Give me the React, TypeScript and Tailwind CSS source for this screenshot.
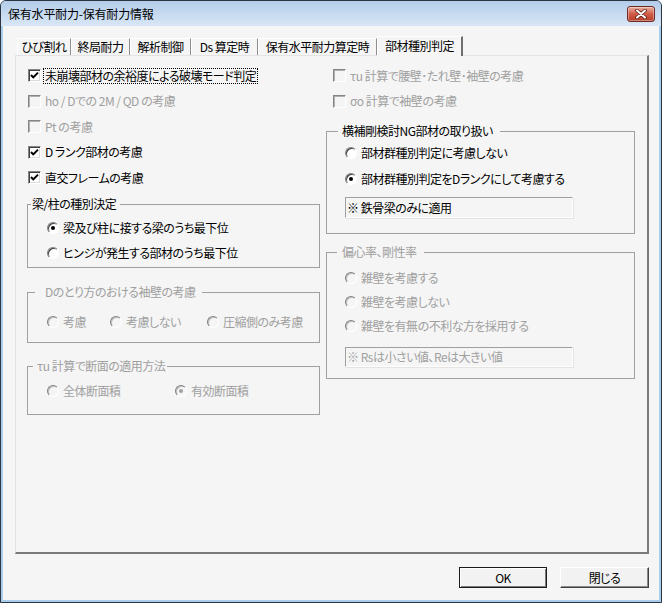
import React from 'react';

// text colour for greyed-out controls
const dis = 'text-[#a0a0a0]';

function CheckBox({ checked, disabled }: { checked?: boolean; disabled?: boolean }) {
  return (
    <span
      className={`flex h-[13px] w-[13px] shrink-0 items-center justify-center border border-t-[#858585] border-l-[#858585] border-b-white border-r-white ${
        disabled
          ? 'bg-[#f5f5f5] shadow-[inset_1px_1px_0_#b0b0b0]'
          : 'bg-white shadow-[inset_1px_1px_0_#404040,inset_-1px_-1px_0_#dcdcdc]'
      }`}
    >
      {checked && (
        <svg width="9" height="9" viewBox="0 0 9 9">
          <path d="M1 4 L3.3 6.4 L8 1.6" stroke="#000" strokeWidth="2" fill="none" />
        </svg>
      )}
    </span>
  );
}

function RadioDot({ checked, disabled }: { checked?: boolean; disabled?: boolean }) {
  return (
    <span
      className={`flex h-[12px] w-[12px] shrink-0 items-center justify-center rounded-full border border-t-[#808080] border-l-[#808080] border-b-white border-r-white ${
        disabled
          ? 'bg-[#f5f5f5] shadow-[inset_1px_1px_0_#c0c0c0]'
          : 'bg-white shadow-[inset_1px_1px_0_#404040]'
      }`}
    >
      {checked && (
        <span className={`h-[4px] w-[4px] rounded-full ${disabled ? 'bg-[#a0a0a0]' : 'bg-black'}`} />
      )}
    </span>
  );
}

type RowProps = {
  label: string;
  checked?: boolean;
  disabled?: boolean;
  focus?: boolean;
  className?: string;
};

function CheckRow({ label, checked, disabled, focus, className = '' }: RowProps) {
  return (
    <div className={`flex h-[25.5px] items-center ${className}`}>
      <CheckBox checked={checked} disabled={disabled} />
      <span
        className={`ml-[3px] whitespace-nowrap px-[1px] leading-[14px] ${disabled ? dis : 'text-black'} ${
          focus ? 'outline outline-1 outline-dotted outline-black' : ''
        }`}
      >
        {label}
      </span>
    </div>
  );
}

function RadioRow({ label, checked, disabled, className = '' }: RowProps) {
  return (
    <div className={`flex items-center ${className}`}>
      <RadioDot checked={checked} disabled={disabled} />
      <span className={`ml-[4px] whitespace-nowrap leading-[14px] ${disabled ? dis : 'text-black'}`}>{label}</span>
    </div>
  );
}

function Group({
  title,
  disabled,
  legendClass,
  className,
  children,
}: {
  title: string;
  disabled?: boolean;
  legendClass: string;
  className: string;
  children: React.ReactNode;
}) {
  return (
    <fieldset className={`border border-[#a0a0a0] p-0 ${className}`}>
      <legend className={`whitespace-nowrap leading-[14px] ${legendClass} ${disabled ? dis : 'text-black'}`}>
        {title}
      </legend>
      {children}
    </fieldset>
  );
}

function NoteBox({ text, disabled, className }: { text: string; disabled?: boolean; className: string }) {
  return (
    <div
      className={`ml-[18px] flex w-[228px] items-center border border-t-[#a0a0a0] border-l-[#a0a0a0] border-b-white border-r-white shadow-[1px_1px_0_#e3e3e3] ${className} ${
        disabled ? dis : 'text-black'
      }`}
    >
      <span className="pl-[1px] leading-[14px] whitespace-nowrap">{text}</span>
    </div>
  );
}

const tabs = [
  { label: 'ひび割れ', w: 'w-[54px]' },
  { label: '終局耐力', w: 'w-[59px]' },
  { label: '解析制御', w: 'w-[61px]' },
  { label: 'Ds 算定時', w: 'w-[67px]' },
  { label: '保有水平耐力算定時', w: 'w-[119px]' },
];

export default function App() {
  return (
    <div className="h-[603px] w-[662px] bg-white font-['Noto_Sans_CJK_JP','Noto_Sans_CJK_SC',sans-serif] text-[12px] tracking-[-0.5px] [font-feature-settings:'palt']">
      <div className="flex h-full w-full flex-col overflow-hidden rounded-t-[6px] border border-[#2b3440] bg-[#a9cdea]">
        {/* title bar */}
        <div className="flex h-[25px] shrink-0 items-center bg-gradient-to-b from-[#b3cce9] to-[#d9e7f6] pl-[7px] pr-[6px]">
          <span className="leading-[14px] tracking-[-0.2px] text-black">保有水平耐力-保有耐力情報</span>
          <div className="ml-auto flex h-[16px] w-[28px] items-center justify-center rounded-[3px] border border-[#6d2b22] bg-gradient-to-b from-[#e9b1a4] via-[#cf5a45] to-[#b8402c] shadow-[inset_0_0_0_1px_rgba(255,255,255,0.35)]">
            <svg width="12" height="10" viewBox="0 0 12 10">
              <path d="M2 1.5 L10 8.5 M10 1.5 L2 8.5" stroke="#5a1d14" strokeWidth="3.6" strokeLinecap="round" />
              <path d="M2 1.5 L10 8.5 M10 1.5 L2 8.5" stroke="#fff" strokeWidth="2" strokeLinecap="round" />
            </svg>
          </div>
        </div>

        {/* client area */}
        <div className="mx-[2px] mb-[2px] flex flex-1 flex-col bg-[#f5f5f5]">
          {/* tab strip */}
          <div className="relative z-10 ml-[14px] mt-[10px] flex h-[19px] items-end">
            {tabs.map((t) => (
              <div
                key={t.label}
                className={`flex h-[17px] ${t.w} items-center justify-center border-l border-t border-r border-l-white border-t-white border-r-[#8e8e8e] leading-[14px] whitespace-nowrap`}
              >
                {t.label}
              </div>
            ))}
            <div className="-mb-[1px] flex h-[20px] w-[86px] items-center justify-center border-l border-t border-l-white border-t-white border-r-2 border-r-[#6f6f6f] bg-[#f5f5f5] pb-[2px] leading-[14px] whitespace-nowrap">
              部材種別判定
            </div>
          </div>

          {/* tab panel */}
          <div className="ml-[12px] flex h-[499px] w-[634px] border-l border-t border-l-[#e3e3e3] border-t-[#e3e3e3] border-r-2 border-b-2 border-r-[#7a7a7a] border-b-[#7a7a7a] pt-[7px]">
            {/* left column */}
            <div className="ml-[11px] flex w-[293px] flex-col">
              <CheckRow className="pl-[1px]" label="未崩壊部材の余裕度による破壊モード判定" checked focus />
              <CheckRow className="pl-[1px]" label="ho / Dでの 2M / QD の考慮" disabled />
              <CheckRow className="pl-[1px]" label="Pt の考慮" disabled />
              <CheckRow className="pl-[1px]" label="D ランク部材の考慮" checked />
              <CheckRow className="pl-[1px]" label="直交フレームの考慮" checked />

              <Group title="梁/柱の種別決定" legendClass="ml-[3px] pl-[1px] pr-[4px]" className="mt-[6.5px] w-[293px]">
                <div className="pl-[19px] pt-[4.5px] pb-[1.5px]">
                  <RadioRow className="h-[25px]" label="梁及び柱に接する梁のうち最下位" checked />
                  <RadioRow className="h-[25px]" label="ヒンジが発生する部材のうち最下位" />
                </div>
              </Group>

              <Group
                title="Dのとり方のおける袖壁の考慮"
                disabled
                legendClass="ml-[7px] pl-[10px] pr-[6px]"
                className="mt-[17px] w-[293px]"
              >
                <div className="flex pl-[19px] pt-[10.5px] pb-[7.5px]">
                  <RadioRow className="h-[25px] w-[63px]" label="考慮" disabled />
                  <RadioRow className="h-[25px] w-[97px]" label="考慮しない" disabled />
                  <RadioRow className="h-[25px]" label="圧縮側のみ考慮" disabled />
                </div>
              </Group>

              <Group
                title="τu 計算で断面の適用方法"
                disabled
                legendClass="ml-[5px] pl-[4px] pr-[2px]"
                className="mt-[16px] w-[293px]"
              >
                <div className="flex pl-[19px] pt-[5.5px] pb-[10.5px]">
                  <RadioRow className="h-[25px] w-[128px]" label="全体断面積" disabled />
                  <RadioRow className="h-[25px]" label="有効断面積" checked disabled />
                </div>
              </Group>
            </div>

            {/* right column */}
            <div className="ml-[6px] flex w-[309px] flex-col">
              <CheckRow className="pl-[7px]" label="τu 計算で腰壁･たれ壁･袖壁の考慮" disabled />
              <CheckRow className="pl-[7px]" label="σo 計算で袖壁の考慮" disabled />

              <Group title="横補剛検討NG部材の取り扱い" legendClass="ml-[11px] pl-[4px] pr-[7px]" className="mt-[10px] w-[309px]">
                <div className="pt-[2px] pb-[15px]">
                  <div className="pl-[18px]">
                    <RadioRow className="h-[26px]" label="部材群種別判定に考慮しない" />
                    <RadioRow className="h-[26px]" label="部材群種別判定をDランクにして考慮する" checked />
                  </div>
                  <NoteBox className="mt-[5px] h-[21px]" text="※ 鉄骨梁のみに適用" />
                </div>
              </Group>

              <Group title="偏心率、剛性率" disabled legendClass="ml-[10px] pl-[5px] pr-[7px]" className="mt-[11px] w-[309px]">
                <div className="pt-[7px] pb-[11px]">
                  <div className="pl-[18px]">
                    <RadioRow className="h-[24px]" label="雑壁を考慮する" disabled />
                    <RadioRow className="h-[24px]" label="雑壁を考慮しない" disabled />
                    <RadioRow className="h-[24px]" label="雑壁を有無の不利な方を採用する" disabled />
                  </div>
                  <NoteBox className="mt-[9px] h-[20px]" text="※ Rsは小さい値、Reは大きい値" disabled />
                </div>
              </Group>
            </div>
          </div>

          {/* dialog buttons */}
          <div className="mt-[13px] ml-[12px] flex w-[634px] justify-end gap-[13px]">
            <button className="flex h-[21px] w-[88px] items-center justify-center border border-[#1a1a1a] bg-[#f2f2f2] leading-[14px] text-black shadow-[inset_1px_1px_0_#fff,inset_-1px_-1px_0_#7a7a7a]">
              OK
            </button>
            <button className="flex h-[21px] w-[89px] items-center justify-center border border-t-white border-l-white border-b-[#404040] border-r-[#404040] bg-[#f2f2f2] leading-[14px] text-black shadow-[inset_-1px_-1px_0_#8a8a8a]">
              閉じる
            </button>
          </div>
        </div>
      </div>
    </div>
  );
}
